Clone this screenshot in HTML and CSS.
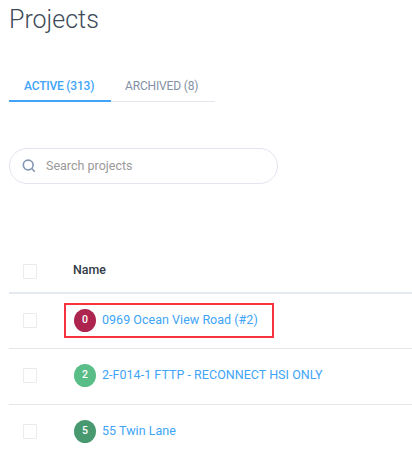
FILE: index.html
```html
<!DOCTYPE html>
<html lang="en">
<head>
    <meta charset="UTF-8">
    <meta name="viewport" content="width=device-width, initial-scale=1.0">
    <title>Projects</title>
    <link rel="stylesheet" href="styles.css">
</head>
<body>
    <h1>Projects</h1>
    <nav class="tabs">
        <a class="tab tab-active" href="#">ACTIVE (313)</a>
        <a class="tab tab-archived" href="#">ARCHIVED (8)</a>
    </nav>
    <form class="search">
        <svg class="search-icon" width="14" height="14" viewBox="0 0 14 14" fill="none">
            <circle cx="6.2" cy="6" r="4.9"/>
            <path d="M9.7 9.5L12.4 12.2"/>
        </svg>
        <input type="text" placeholder="Search projects">
    </form>
    <table>
        <thead>
            <tr>
                <th class="check"><input type="checkbox"></th>
                <th><span class="heading">Name</span></th>
            </tr>
        </thead>
        <tbody>
            <tr>
                <td class="check"><input type="checkbox"></td>
                <td><div class="project highlight"><span class="badge badge-red">0</span><a href="#">0969 Ocean View Road (#2)</a></div></td>
            </tr>
            <tr>
                <td class="check"><input type="checkbox"></td>
                <td><div class="project"><span class="badge badge-light">2</span><a href="#">2-F014-1 FTTP - RECONNECT HSI ONLY</a></div></td>
            </tr>
            <tr>
                <td class="check"><input type="checkbox"></td>
                <td><div class="project"><span class="badge badge-green">5</span><a href="#">55 Twin Lane</a></div></td>
            </tr>
        </tbody>
    </table>
</body>
</html>
```
FILE: styles.css
```css
* {
    box-sizing: border-box;
}
body {
    margin: 0;
    padding: 5px 0 0 9px;
    height: 457px;
    overflow: hidden;
    background-color: #ffffff;
    font-family: Roboto, sans-serif;
}
a {
    color: #40a4f8;
    text-decoration: none;
}
h1 {
    margin: 0;
    height: 66px;
    font-size: 25px;
    font-weight: 300;
    line-height: 30px;
    color: #3e4a59;
}
.tabs {
    display: flex;
    width: 206px;
    height: 31px;
}
.tab {
    height: 31px;
    padding-left: 14px;
    border-bottom: 1px solid #e2e6ee;
    font-size: 12px;
    line-height: 31px;
    letter-spacing: -0.15px;
    white-space: nowrap;
}
.tab-active {
    width: 102px;
    padding-left: 15px;
    border-bottom: 2px solid #40a4f8;
    font-weight: 500;
    letter-spacing: -0.2px;
}
.tab-archived {
    width: 104px;
    color: #8390a5;
}
.search {
    display: flex;
    align-items: center;
    width: 269px;
    height: 36px;
    margin: 46px 0 66px;
    padding-left: 12px;
    border: 1px solid #e2e5ef;
    border-radius: 18px;
}
.search-icon {
    flex: none;
    margin-right: 10px;
    stroke: #8397b3;
    stroke-width: 1.6;
    stroke-linecap: round;
}
.search input {
    width: 200px;
    padding: 0 0 2px;
    border: none;
    outline: none;
    background: none;
    font-family: inherit;
    font-size: 12.5px;
}
.search input::placeholder {
    color: #999999;
}
table {
    width: 403px;
    border-collapse: separate;
    border-spacing: 0;
    table-layout: fixed;
}
th, td {
    height: 56px;
    padding: 0;
    border-bottom: 1px solid #e4e6ec;
    text-align: left;
    vertical-align: top;
}
th {
    height: 44px;
    border-bottom: 2px solid #e4e8ef;
}
tbody tr:first-child td {
    height: 55px;
}
tbody tr:last-child td {
    border-bottom: none;
}
.check {
    width: 55px;
    padding: 19px 0 0 14px;
}
th.check {
    padding-top: 14px;
}
.check input {
    display: block;
    appearance: none;
    width: 14px;
    height: 15px;
    margin: 0;
    border: 1px solid #ebebeb;
    border-radius: 1px;
}
.heading {
    display: block;
    padding: 12px 0 0 9px;
    font-size: 12.4px;
    font-weight: 500;
    line-height: 16px;
    color: #323b47;
}
.project {
    display: flex;
    align-items: center;
    width: max-content;
    height: 35px;
    margin-top: 9px;
    padding-left: 10px;
    font-size: 12.5px;
    letter-spacing: 0.03px;
    white-space: nowrap;
}
.project a {
    padding-bottom: 2px;
}
.highlight {
    width: 210px;
    padding-left: 8px;
    border: 2px solid #f8333f;
}
.badge {
    width: 22px;
    height: 23px;
    margin-right: 6px;
    border-radius: 50%;
    font-size: 10.5px;
    font-weight: 500;
    line-height: 22px;
    text-align: center;
    color: #ffffff;
}
.badge-red {
    background-color: #ad244f;
}
.badge-light {
    background-color: #59bd87;
}
.badge-green {
    background-color: #499970;
}
```
